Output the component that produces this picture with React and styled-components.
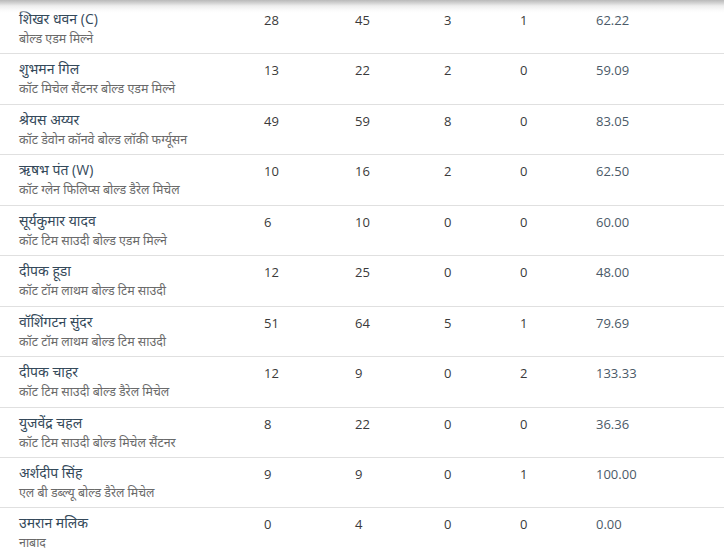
import React from 'react';
import styled, { createGlobalStyle } from 'styled-components';

const GlobalStyle = createGlobalStyle`
  html, body {
    margin: 0;
    padding: 0;
    background: #ffffff;
  }
  body {
    font-family: "Open Sans", "Noto Sans", sans-serif;
    overflow: hidden;
  }
`;

const Wrapper = styled.div`
  width: 724px;
  height: 557px;
  overflow: hidden;
  position: relative;
  background: #fff;

  &::before {
    content: '';
    position: absolute;
    top: 0;
    left: 0;
    right: 0;
    height: 13px;
    background: linear-gradient(to bottom, #b9b9b9 0%, #cfcfcf 20%, #ededed 45%, #fafafa 75%, rgba(255, 255, 255, 0) 100%);
    pointer-events: none;
  }
`;

const Table = styled.div`
  display: flex;
  flex-direction: column;
  padding-top: 4px;
`;

const Row = styled.div`
  display: grid;
  grid-template-columns: 245px 91px 89px 76px 76px 1fr;
  align-items: start;
  height: 50.44px;
  box-sizing: border-box;
  padding: 5px 0 0 19px;
  border-bottom: 1px solid #e0e0e0;

  &:last-child {
    border-bottom: none;
  }
`;

const Player = styled.div`
  display: flex;
  flex-direction: column;
  gap: 1px;
`;

const Name = styled.span`
  font-size: 14px;
  line-height: 19px;
  color: #34495a;
`;

const Dismissal = styled.span`
  font-size: 12.4px;
  line-height: 19px;
  color: #6a6a6a;
`;

const Stat = styled.span`
  margin-top: 2px;
  font-size: 13px;
  line-height: 19px;
  color: ${(p) => (p.$rate ? '#4b5a68' : '#3a3a3a')};
`;

const batters = [
  { name: 'शिखर धवन (C)', out: 'बोल्ड एडम मिल्ने', r: 28, b: 45, f: 3, s: 1, sr: '62.22' },
  { name: 'शुभमन गिल', out: 'कॉट मिचेल सैंटनर बोल्ड एडम मिल्ने', r: 13, b: 22, f: 2, s: 0, sr: '59.09' },
  { name: 'श्रेयस अय्यर', out: 'कॉट डेवोन कॉनवे बोल्ड लॉकी फर्ग्यूसन', r: 49, b: 59, f: 8, s: 0, sr: '83.05' },
  { name: 'ऋषभ पंत (W)', out: 'कॉट ग्लेन फिलिप्स बोल्ड डैरेल मिचेल', r: 10, b: 16, f: 2, s: 0, sr: '62.50' },
  { name: 'सूर्यकुमार यादव', out: 'कॉट टिम साउदी बोल्ड एडम मिल्ने', r: 6, b: 10, f: 0, s: 0, sr: '60.00' },
  { name: 'दीपक हूडा', out: 'कॉट टॉम लाथम बोल्ड टिम साउदी', r: 12, b: 25, f: 0, s: 0, sr: '48.00' },
  { name: 'वॉशिंगटन सुंदर', out: 'कॉट टॉम लाथम बोल्ड टिम साउदी', r: 51, b: 64, f: 5, s: 1, sr: '79.69' },
  { name: 'दीपक चाहर', out: 'कॉट टिम साउदी बोल्ड डैरेल मिचेल', r: 12, b: 9, f: 0, s: 2, sr: '133.33' },
  { name: 'युजवेंद्र चहल', out: 'कॉट टिम साउदी बोल्ड मिचेल सैंटनर', r: 8, b: 22, f: 0, s: 0, sr: '36.36' },
  { name: 'अर्शदीप सिंह', out: 'एल बी डब्ल्यू बोल्ड डैरेल मिचेल', r: 9, b: 9, f: 0, s: 1, sr: '100.00' },
  { name: 'उमरान मलिक', out: 'नाबाद', r: 0, b: 4, f: 0, s: 0, sr: '0.00' },
];

export default function App() {
  return (
    <>
      <GlobalStyle />
      <Wrapper>
        <Table>
          {batters.map((p) => (
            <Row key={p.name}>
              <Player>
                <Name>{p.name}</Name>
                <Dismissal>{p.out}</Dismissal>
              </Player>
              <Stat>{p.r}</Stat>
              <Stat>{p.b}</Stat>
              <Stat>{p.f}</Stat>
              <Stat>{p.s}</Stat>
              <Stat $rate>{p.sr}</Stat>
            </Row>
          ))}
        </Table>
      </Wrapper>
    </>
  );
}
